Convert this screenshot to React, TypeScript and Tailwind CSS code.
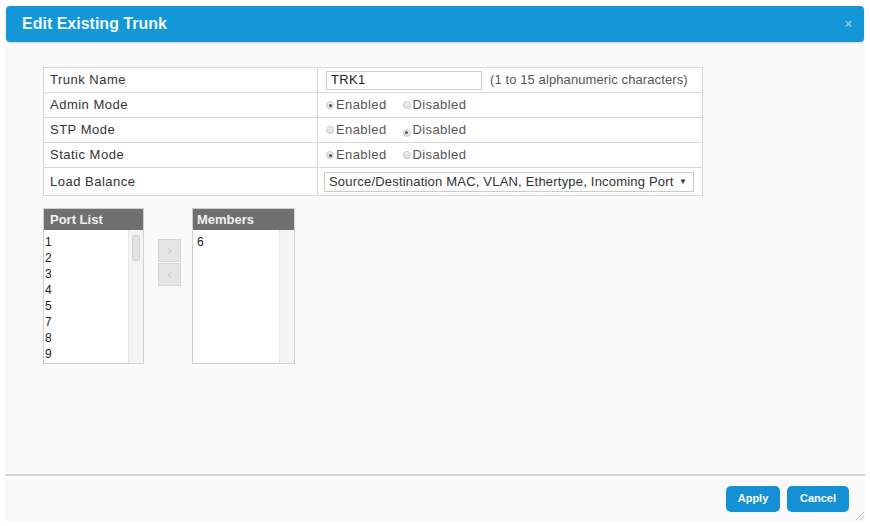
import React from "react";

const Radio = ({ on }: { on: boolean }) => (
  <span className="inline-flex h-[8px] w-[8px] items-center justify-center rounded-full border border-[#c8c8c8] bg-gradient-to-b from-[#f4f4f4] to-[#dcdcdc]">
    {on && <span className="h-[3px] w-[3px] rounded-full bg-[#555]" />}
  </span>
);

const RadioPair = ({ enabled }: { enabled: boolean }) => (
  <div className="flex items-center whitespace-nowrap text-[13px] tracking-[0.4px] text-[#555]">
    <Radio on={enabled} />
    <span className="ml-[2px]">Enabled</span>
    <span className="ml-[16px]"><Radio on={!enabled} /></span>
    <span className="ml-[2px]">Disabled</span>
  </div>
);

const Row = ({ label, children, h, last }: { label: string; children: React.ReactNode; h: string; last?: boolean }) => (
  <div className={`flex ${h} ${last ? "" : "border-b border-[#d8d8d8]"}`}>
    <div className="flex w-[274px] shrink-0 items-center border-r border-[#d8d8d8] pl-[6px] text-[13px] tracking-[0.5px] text-[#333]">{label}</div>
    <div className="flex flex-1 items-center pl-[8px]">{children}</div>
  </div>
);

export default function App() {
  const ports = ["1", "2", "3", "4", "5", "7", "8", "9"];
  return (
    <div className="h-[526px] w-[870px] bg-white p-[5px]" style={{ fontFamily: '"Liberation Sans", Arial, sans-serif' }}>
      <div className="flex h-[516px] flex-col bg-[#fafafa]">
        <div className="mx-[1px] mt-[1px] flex h-[36px] items-center justify-between rounded-[4px] bg-[#1596d6] pl-[16px] pr-[12px] shadow-[0_1px_2px_rgba(0,0,0,0.15)]">
          <span className="text-[16px] font-bold text-[#eef8ff]">Edit Existing Trunk</span>
          <span className="text-[13px] font-bold text-[#8cc4e4]">×</span>
        </div>
        <div className="flex-1 pl-[38px] pt-[25px]">
          <div className="w-[660px] border border-[#d8d8d8] bg-white">
            <Row label="Trunk Name" h="h-[25px]">
              <div className="flex h-[19px] w-[156px] items-center border border-[#ccc] bg-white pl-[4px] text-[13px] tracking-[0.3px] text-[#222]">TRK1</div>
              <span className="ml-[8px] whitespace-nowrap text-[13px] tracking-[0.1px] text-[#555]">(1 to 15 alphanumeric characters)</span>
            </Row>
            <Row label="Admin Mode" h="h-[25px]"><RadioPair enabled={true} /></Row>
            <Row label="STP Mode" h="h-[25px]"><RadioPair enabled={false} /></Row>
            <Row label="Static Mode" h="h-[25px]"><RadioPair enabled={true} /></Row>
            <Row label="Load Balance" h="h-[27px]" last>
              <div className="-ml-[2px] flex h-[20px] w-[370px] items-center justify-between whitespace-nowrap border border-[#ccc] bg-white pl-[4px] pr-[6px] text-[13px] tracking-[0.2px] text-[#333]">
                <span>Source/Destination MAC, VLAN, Ethertype, Incoming Port</span>
                <span className="text-[8px]">▼</span>
              </div>
            </Row>
          </div>
          <div className="mt-[12px] flex">
            <div className="w-[101px] border border-[#cfcfcf]">
              <div className="flex h-[21px] items-center bg-[#707070] pl-[6px] text-[13px] font-bold text-[#f0f0f0]">Port List</div>
              <div className="flex h-[133px] overflow-hidden bg-white">
                <div className="flex-1 pl-[1px] pt-[4px] text-[12px] leading-[16px] text-[#222]">
                  {ports.map((p) => <div key={p}>{p}</div>)}
                </div>
                <div className="w-[15px] border-l border-[#e6e6e6] bg-[#f4f4f4] pt-[5px] pl-[3px]">
                  <div className="h-[26px] w-[8px] rounded-[2px] border border-[#cfcfcf] bg-[#e2e2e2]" />
                </div>
              </div>
            </div>
            <div className="ml-[14px] mt-[31px] flex flex-col gap-[1px]">
              <div className="flex h-[23px] w-[23px] items-center justify-center border border-[#d6d6d6] bg-[#e4e4e4] text-[14px] text-[#cfcfcf]">›</div>
              <div className="flex h-[23px] w-[23px] items-center justify-center border border-[#d6d6d6] bg-[#e4e4e4] text-[14px] text-[#cfcfcf]">‹</div>
            </div>
            <div className="ml-[11px] w-[103px] border border-[#cfcfcf]">
              <div className="flex h-[21px] items-center bg-[#707070] pl-[4px] text-[13px] font-bold text-[#f0f0f0]">Members</div>
              <div className="flex h-[133px] bg-white">
                <div className="flex-1 pl-[4px] pt-[4px] text-[12px] leading-[16px] text-[#222]">6</div>
                <div className="w-[15px] border-l border-[#e6e6e6] bg-[#f4f4f4]" />
              </div>
            </div>
          </div>
        </div>
        <div className="relative flex h-[47px] items-center justify-end gap-[7px] border-t-2 border-[#d4d4d4] pr-[16px]">
          <button className="h-[26px] w-[54px] rounded-[5px] bg-[#1590d4] text-[11px] font-bold text-white">Apply</button>
          <button className="h-[26px] w-[62px] rounded-[5px] bg-[#1590d4] text-[11px] font-bold text-white">Cancel</button>
          <svg className="absolute bottom-0 right-0" width="12" height="12" viewBox="0 0 12 12">
            <path d="M11 3 L3 11 M11 7 L7 11" stroke="#b5b5b5" strokeWidth="1" />
          </svg>
        </div>
      </div>
    </div>
  );
}
